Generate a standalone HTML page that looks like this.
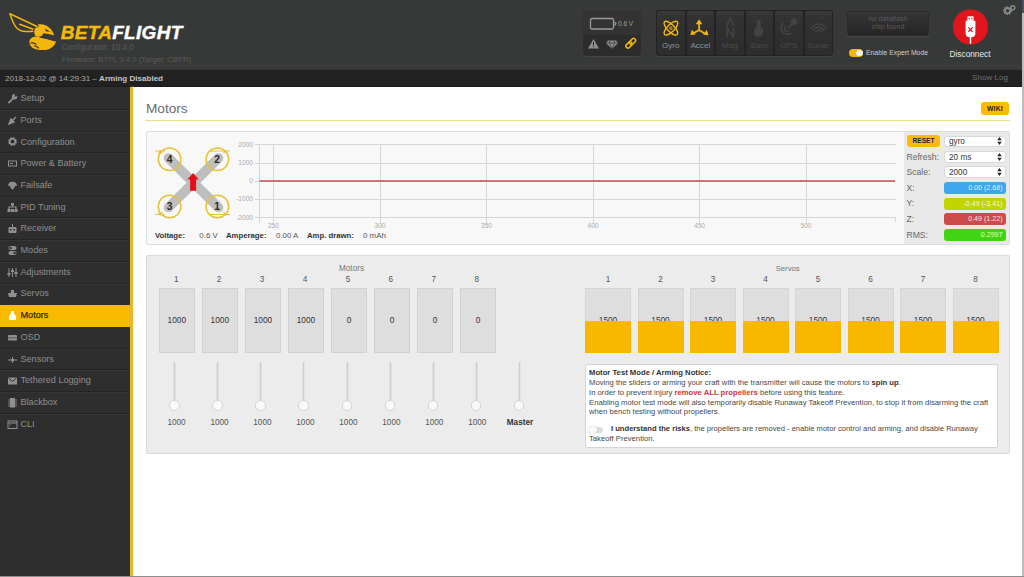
<!DOCTYPE html><html><head><meta charset="utf-8"><style>
*{margin:0;padding:0;box-sizing:border-box}
html,body{width:1024px;height:577px;overflow:hidden}
body{position:relative;background:#fff;font-family:"Liberation Sans",sans-serif;color:#333}
.a{position:absolute}
.t{position:absolute;white-space:nowrap}
#hdr{left:0;top:0;width:1024px;height:70px;background:linear-gradient(#373938 0,#373938 88%,#3b3d3c 95%,#353736 100%)}
#log{left:0;top:70px;width:1024px;height:17px;background:#232222;border-bottom:1.5px solid #1b1b1b}
#side{left:0;top:87px;width:130px;height:490px;background:#2e2e2e}
#strip{left:129.6px;top:87px;width:3.8px;height:490px;background:#e2b832;box-shadow:-0.5px 0 0.5px #1a1a1a,1px 0 1.5px #fff3b8}
#rstrip{left:1022.3px;top:13px;width:1.7px;height:564px;background:#bcbcbc}
.it{position:absolute;left:0;width:130px;color:#8e8e8e;font-size:9.1px;white-space:nowrap}
.it span{position:absolute;left:20.5px}
.it svg{position:absolute;left:6.5px;top:5.3px}
.it:after{content:'';position:absolute;left:0;bottom:-0.5px;width:128px;height:1px;background:#242424;box-shadow:0 1px 0 #353535}
.it.on{background:#f9bb00;color:#3a2b00;-webkit-text-stroke:0.25px #3a2b00}
.it.on:after,.it.nb:after{display:none}
.sel{position:absolute;background:#fff;border:1px solid #d8d8d8;border-radius:3px;font-size:8.2px;color:#333;padding-left:4.5px}
.sel:after{content:"";position:absolute}
.bar{position:absolute;left:943.5px;width:62px;height:12px;border-radius:3px;color:rgba(255,255,255,0.88);font-size:7.1px;text-align:right;padding-right:3px;line-height:12px}
.lbl{position:absolute;left:906.5px;font-size:8.6px;color:#666}
.mb{position:absolute;top:288px;width:36px;height:65px;background:#dedede;border:1px solid #d2d2d2;font-size:8.3px;color:#333;text-align:center;line-height:62px}
.mn{position:absolute;top:275px;width:36px;text-align:center;font-size:8.2px;color:#555}
.trk{position:absolute;top:362px;width:3px;height:44px;background:#cfcfcf;border-left:1px solid #e2e2e2;border-right:1px solid #e2e2e2}
.thb{position:absolute;top:400.3px;width:10.5px;height:10.5px;border-radius:50%;background:#f9f9f9;border:1px solid #d4d4d4}
.mv{position:absolute;top:417.5px;width:40px;text-align:center;font-size:8.2px;color:#555}
.sb{position:absolute;top:288px;width:46px;height:65.3px;background:#dedede;border:1px solid #d4d4d4;font-size:8.3px;color:#333;text-align:center}
.sb i{position:absolute;left:-1px;bottom:-1px;width:calc(100% + 2px);height:32.4px;background:#f8b800}
.sb span{position:absolute;left:0;right:0;top:25.6px;line-height:10px}
.nt{position:absolute;left:589px;font-size:7.7px;color:#474747;white-space:nowrap}
</style></head><body>
<div id="hdr" class="a"></div>
<svg class="a" style="left:0px;top:0px" width="60" height="56" viewBox="0 0 60 56">
<g fill="none" stroke="#f2b60c" stroke-width="1.5" stroke-linejoin="round" stroke-linecap="round">
<path d="M9.9 13.7 L37 26.5 M9.9 13.7 Q11.5 19 14 24 Q17 30 22 31 Q28 32 33 31.3"/>
<path d="M19.7 24.3 L33 29.2"/>
</g>
<path fill="#f2b60c" d="M38 24.3 Q46 23.3 51 29.3 Q53 32 54.2 35.2 Q48 33.8 43 33.3 Q39.5 30.5 38 24.3Z"/>
<path fill="#373938" d="M45.3 28.4 L50.3 31.9 L45.8 31.2Z"/>
<circle cx="38.5" cy="32" r="4.9" fill="#f2b60c"/>
<path fill="none" stroke="#2a2a2a" stroke-width="0.9" d="M34 29 Q33.2 32 34.3 35"/>
<path fill="#f2b60c" d="M29.2 41.5 Q30.5 37 35.5 36.5 Q44 37.8 56.2 41.5 Q53.5 48.5 46 50 Q37 50.6 32 47.5 Q29.4 45 29.2 41.5Z"/>
<path fill="none" stroke="#373938" stroke-width="1.1" d="M39.5 37 Q48 38.3 55.5 41"/>
<path fill="none" stroke="#2e2e2e" stroke-width="1.1" stroke-linecap="round" d="M30.8 43 Q33.5 42.6 36 44.2 M34.4 45.8 Q36.6 46.2 38.4 48"/>
</svg>
<div class="t" style="left:60.8px;top:23.2px;font-size:18.9px;font-weight:bold;font-style:italic;letter-spacing:0.35px;line-height:20px;-webkit-text-stroke:0.45px currentColor"><span style="color:#f5b90a">BETA</span><span style="color:#fff">FLIGHT</span></div>
<div class="t" style="left:61.5px;top:43.2px;font-size:8.2px;color:#585a59;line-height:10px">Configurator: 10.4.0</div>
<div class="t" style="left:61.5px;top:54.6px;font-size:7.8px;color:#585a59;line-height:10px">Firmware: BTFL 3.4.0 (Target: CBFR)</div>
<div class="a" style="left:583px;top:10.5px;width:58px;height:45px;border-radius:3px;background:#2c2c2c;box-shadow:inset 0 1px 0 #262626,0 1px 0 #454545"></div>
<div class="a" style="left:583px;top:10.5px;width:58px;height:24px;border-radius:3px 3px 0 0;background:#333"></div>
<svg class="a" style="left:588px;top:16px" width="50" height="16">
<rect x="2.5" y="2.5" width="23" height="10.5" rx="1.5" fill="none" stroke="#9a9a9a" stroke-width="1.3"/>
<path d="M26.5 6 L28 7.7 L26.5 9.5" fill="none" stroke="#9a9a9a" stroke-width="1.2"/>
</svg>
<div class="t" style="left:618px;top:19.5px;font-size:6.5px;color:#a0a0a0;line-height:8px">0.6 V</div>
<svg class="a" style="left:586px;top:37px" width="54" height="14">
<path d="M7.5 2 L13 11.5 L2 11.5 Z" fill="#8e8e8e"/>
<rect x="7" y="5" width="1" height="3.5" fill="#2c2c2c"/><rect x="7" y="9.3" width="1" height="1" fill="#2c2c2c"/>
<path d="M22 3.5 L30 3.5 L32 6 L26 12 L20 6 Z" fill="#8e8e8e"/>
<path d="M20.5 6 L31.5 6 M24 3.5 L23.5 6 L26 12 L28.5 6 L28 3.5" stroke="#2c2c2c" stroke-width="0.6" fill="none"/>
<g fill="none" stroke="#f0b800" stroke-width="1.5">
<rect x="39.5" y="6" width="7" height="4" rx="2" transform="rotate(-45 43 8)"/>
<rect x="43" y="2.5" width="7" height="4" rx="2" transform="rotate(-45 46.5 4.5)"/>
</g>
</svg>
<div class="a" style="left:656px;top:10.4px;width:177px;height:46px;border-radius:3px;background:#232323;box-shadow:0 1px 0 #424443"></div>
<div class="a" style="left:657.0px;top:11.4px;width:27.6px;height:44px;background:linear-gradient(#3a3a3a,#333 12%,#2f2f2f 50%,#2d2d2d);border-radius:2px"></div>
<div class="a" style="left:686.5px;top:11.4px;width:27.6px;height:44px;background:linear-gradient(#3a3a3a,#333 12%,#2f2f2f 50%,#2d2d2d);border-radius:2px"></div>
<div class="a" style="left:716.0px;top:11.4px;width:27.6px;height:44px;background:linear-gradient(#3a3a3a,#333 12%,#2f2f2f 50%,#2d2d2d);border-radius:2px"></div>
<div class="a" style="left:745.5px;top:11.4px;width:27.6px;height:44px;background:linear-gradient(#3a3a3a,#333 12%,#2f2f2f 50%,#2d2d2d);border-radius:2px"></div>
<div class="a" style="left:775.0px;top:11.4px;width:27.6px;height:44px;background:linear-gradient(#3a3a3a,#333 12%,#2f2f2f 50%,#2d2d2d);border-radius:2px"></div>
<div class="a" style="left:804.5px;top:11.4px;width:27.6px;height:44px;background:linear-gradient(#3a3a3a,#333 12%,#2f2f2f 50%,#2d2d2d);border-radius:2px"></div>
<div class="t" style="left:650.8px;top:41.3px;width:40px;text-align:center;font-size:8.1px;line-height:10px;color:#929292">Gyro</div>
<div class="t" style="left:680.3px;top:41.3px;width:40px;text-align:center;font-size:8.1px;line-height:10px;color:#929292">Accel</div>
<div class="t" style="left:709.8px;top:41.3px;width:40px;text-align:center;font-size:8.1px;line-height:10px;color:#4a4a4a">Mag</div>
<div class="t" style="left:739.3px;top:41.3px;width:40px;text-align:center;font-size:8.1px;line-height:10px;color:#4a4a4a">Baro</div>
<div class="t" style="left:768.8px;top:41.3px;width:40px;text-align:center;font-size:8.1px;line-height:10px;color:#4a4a4a">GPS</div>
<div class="t" style="left:798.3px;top:41.3px;width:40px;text-align:center;font-size:8.1px;line-height:10px;color:#4a4a4a">Sonar</div>
<svg class="a" style="left:0;top:0" width="1024" height="70">
<g fill="none" stroke="#f2b80a" stroke-width="1.4">
<ellipse cx="670.9" cy="28.2" rx="9" ry="3.6" transform="rotate(45 670.9 28.2)"/>
<ellipse cx="670.9" cy="28.2" rx="9" ry="3.6" transform="rotate(-45 670.9 28.2)"/>
<circle cx="670.9" cy="28.2" r="1.2" stroke-width="1"/>
</g>
<g stroke="#f2b80a" stroke-width="1.7" fill="#f2b80a">
<path d="M699.1 30 L699.1 22.5 M699.1 30 L693.5 33.3 M699.1 30 L704.7 33.5" fill="none"/>
<path d="M699.1 19.2 L695.8 24.2 L702.4 24.2Z" stroke="none"/>
<path d="M690.3 35 L692 29.5 L695.5 34.5Z" stroke="none"/>
<path d="M708.5 35.3 L706.8 29.7 L703.2 34.7Z" stroke="none"/>
</g>
<g fill="#434343" stroke="#434343">
<path d="M726.5 26 L730.2 18 L733.9 26" fill="none" stroke-width="1.6"/>
<path d="M727 37 L727 28 L733.4 37 L733.4 28" fill="none" stroke-width="1.6"/>
<rect x="756.6" y="19.5" width="4" height="10" rx="2" stroke="none"/>
<circle cx="758.6" cy="32" r="4.8" stroke="none"/>
<path d="M783.5 23 A5.5 5.5 0 1 0 791 33" fill="none" stroke-width="1.6"/>
<path d="M786 26.5 A2.5 2.5 0 1 0 789 30" fill="none" stroke-width="1.4"/>
<path d="M788 28 L793 23" stroke-width="1.8"/>
<rect x="791" y="18.5" width="6" height="6" transform="rotate(45 794 21.5)" stroke="none"/>
<path d="M810.5 28.5 Q818.5 19.5 826.5 28.5 M812.8 30.3 Q818.5 24 824.2 30.3 M815.2 32 Q818.5 28.5 821.8 32" fill="none" stroke-width="1.7"/>
</g>
</svg>
<div class="a" style="left:847px;top:10.5px;width:82px;height:25.5px;border-radius:3px;background:linear-gradient(#363636,#2c2c2c 60%,#252525);border:1px solid #2a2a2a;box-shadow:0 1px 0 #474747"></div>
<div class="t" style="left:847px;top:15.2px;width:82px;text-align:center;font-size:7.1px;line-height:8px;color:#5a5a5a">no dataflash<br>chip found</div>
<div class="a" style="left:849px;top:49px;width:14px;height:7.5px;border-radius:4px;background:#f0b800"></div>
<div class="a" style="left:856px;top:49.5px;width:6.5px;height:6.5px;border-radius:50%;background:#eee"></div>
<div class="t" style="left:866px;top:48px;font-size:6.85px;line-height:9px;color:#cfcfcf">Enable Expert Mode</div>
<svg class="a" style="left:950px;top:8px" width="42" height="40">
<circle cx="20.5" cy="19" r="17.6" fill="#e2141c"/>
<g fill="#fff">
<rect x="17.4" y="8.3" width="6.2" height="4.6"/>
<path d="M15.6 12.8 L25.4 12.8 L25.4 25.5 Q25.4 28.5 22 29.3 L21.2 29.3 L21.2 35.8 L19.8 35.8 L19.8 29.3 L19 29.3 Q15.6 28.5 15.6 25.5Z"/>
</g>
<rect x="18.6" y="9.8" width="1.2" height="1.5" fill="#e2141c"/><rect x="21.2" y="9.8" width="1.2" height="1.5" fill="#e2141c"/>
<path d="M18.4 19.4 L22.6 23.8 M22.6 19.4 L18.4 23.8" stroke="#e2141c" stroke-width="1.3"/>
</svg>
<div class="t" style="left:949.5px;top:48.5px;font-size:8.3px;line-height:10px;color:#e8e8e8">Disconnect</div>
<svg class="a" style="left:1000px;top:3px" width="20" height="15">
<circle cx="7.5" cy="7.7" r="3.4" fill="none" stroke="#8a8a8a" stroke-width="2" stroke-dasharray="1.4 1.1"/>
<circle cx="7.5" cy="7.7" r="2.6" fill="none" stroke="#8a8a8a" stroke-width="1.6"/>
<circle cx="12.8" cy="4.8" r="2" fill="none" stroke="#8a8a8a" stroke-width="1.4"/>
</svg>
<div class="a" style="left:1021.5px;top:0;width:2.5px;height:13px;background:#4d5260"></div>
<div id="log" class="a"></div>
<div class="t" style="left:5px;top:72.5px;font-size:8.05px;line-height:11px;color:#a9a9a9">2018-12-02 @ 14:29:31 &ndash; <b style="color:#c4c4c4">Arming Disabled</b></div>
<div class="t" style="left:972px;top:72px;font-size:8.1px;line-height:11px;color:#707070">Show Log</div>
<div id="side" class="a"></div>
<div class="it" style="top:87.70px;height:21.71px"><svg width="11" height="11"><path d="M2 9.5 L6.3 5.2" stroke="#909090" stroke-width="1.8" stroke-linecap="round"/><circle cx="7.6" cy="3.7" r="2.7" fill="#909090"/><path d="M8 0.5 L7.6 3.7 L11 3" fill="#2e2e2e"/></svg><span style="top:5.4px;line-height:11px">Setup</span></div>
<div class="it" style="top:109.41px;height:21.71px"><svg width="11" height="11"><path d="M2 9 L4 4 L7 7Z M5 6 L9 2" stroke="#909090" stroke-width="1.4" fill="#909090"/></svg><span style="top:5.4px;line-height:11px">Ports</span></div>
<div class="it" style="top:131.12px;height:21.71px"><svg width="11" height="11"><circle cx="5.5" cy="5.5" r="3.2" fill="none" stroke="#909090" stroke-width="2.4" stroke-dasharray="1.5 1"/><circle cx="5.5" cy="5.5" r="2.8" fill="none" stroke="#909090" stroke-width="1.6"/></svg><span style="top:5.4px;line-height:11px">Configuration</span></div>
<div class="it" style="top:152.83px;height:21.71px"><svg width="11" height="11"><rect x="1.5" y="3" width="8" height="5" fill="none" stroke="#909090" stroke-width="1"/><rect x="3" y="5" width="3" height="1" fill="#909090"/></svg><span style="top:5.4px;line-height:11px">Power &amp; Battery</span></div>
<div class="it" style="top:174.54px;height:21.71px"><svg width="11" height="11"><path d="M1.5 5.5 A4 3.5 0 0 1 9.5 5.5Z M3 6 L5.5 9.5 L8 6" fill="#909090" stroke="#909090" stroke-width="0.8"/></svg><span style="top:5.4px;line-height:11px">Failsafe</span></div>
<div class="it" style="top:196.25px;height:21.71px"><svg width="11" height="11"><path d="M5.5 1.5 V5 M2 8 V5 H9 V8" fill="none" stroke="#909090" stroke-width="1.2"/><rect x="4" y="1" width="3" height="2.5" fill="#909090"/><rect x="0.5" y="7" width="3" height="3" fill="#909090"/><rect x="4" y="7" width="3" height="3" fill="#909090"/><rect x="7.5" y="7" width="3" height="3" fill="#909090"/></svg><span style="top:5.4px;line-height:11px">PID Tuning</span></div>
<div class="it" style="top:217.96px;height:21.71px"><svg width="11" height="11"><rect x="1.5" y="4" width="8" height="6" rx="1" fill="#909090"/><path d="M5.5 4 V1" stroke="#909090"/><rect x="3" y="6" width="1.5" height="1.5" fill="#2e2e2e"/><rect x="6.5" y="6" width="1.5" height="1.5" fill="#2e2e2e"/></svg><span style="top:5.4px;line-height:11px">Receiver</span></div>
<div class="it" style="top:239.67px;height:21.71px"><svg width="11" height="11"><rect x="1.5" y="1" width="8" height="4" rx="2" fill="#909090"/><rect x="1.5" y="6" width="8" height="4" rx="2" fill="#909090"/><circle cx="3.5" cy="3" r="1.2" fill="#2e2e2e"/><circle cx="7.5" cy="8" r="1.2" fill="#2e2e2e"/></svg><span style="top:5.4px;line-height:11px">Modes</span></div>
<div class="it" style="top:261.38px;height:21.71px"><svg width="11" height="11"><path d="M2 1 V10 M5.5 1 V10 M9 1 V10" stroke="#909090" stroke-width="1"/><rect x="0.5" y="6" width="3" height="2" fill="#909090"/><rect x="4" y="3" width="3" height="2" fill="#909090"/><rect x="7.5" y="5" width="3" height="2" fill="#909090"/></svg><span style="top:5.4px;line-height:11px">Adjustments</span></div>
<div class="it nb" style="top:283.09px;height:21.71px"><svg width="11" height="11"><path d="M1 5 H10 L9 9 H2Z" fill="#909090"/><rect x="4" y="2" width="3" height="3" fill="#909090"/></svg><span style="top:5.4px;line-height:11px">Servos</span></div>
<div class="it on" style="top:304.80px;height:21.71px"><svg width="11" height="11"><path d="M4 1 H7 V3.5 Q9 5 9 7 V10 H2 V7 Q2 5 4 3.5Z" fill="#ffffff"/></svg><span style="top:5.4px;line-height:11px">Motors</span></div>
<div class="it" style="top:326.51px;height:21.71px"><svg width="11" height="11"><rect x="1" y="3" width="9" height="5.5" rx="1" fill="#909090"/><path d="M1 5.8 H10" stroke="#2e2e2e" stroke-width="0.6"/></svg><span style="top:5.4px;line-height:11px">OSD</span></div>
<div class="it" style="top:348.22px;height:21.71px"><svg width="11" height="11"><path d="M1 6 H10 M5.5 3 V9" stroke="#909090" stroke-width="1"/><circle cx="5.5" cy="6" r="1.5" fill="#909090"/></svg><span style="top:5.4px;line-height:11px">Sensors</span></div>
<div class="it" style="top:369.93px;height:21.71px"><svg width="11" height="11"><rect x="1" y="2.5" width="9" height="7" fill="#909090"/><path d="M1.5 3 L5.5 6.5 L9.5 3" stroke="#2e2e2e" stroke-width="1" fill="none"/></svg><span style="top:5.4px;line-height:11px">Tethered Logging</span></div>
<div class="it" style="top:391.64px;height:21.71px"><svg width="11" height="11"><rect x="3" y="1" width="5" height="9.5" fill="#909090"/><path d="M1 3 H3 M1 5 H3 M1 7 H3 M1 9 H3 M8 3 H10 M8 5 H10 M8 7 H10 M8 9 H10" stroke="#909090" stroke-width="0.8"/></svg><span style="top:5.4px;line-height:11px">Blackbox</span></div>
<div class="it nb" style="top:413.35px;height:21.71px"><svg width="11" height="11"><rect x="1" y="2" width="9" height="7.5" fill="none" stroke="#909090" stroke-width="1"/><path d="M1 4 H10" stroke="#909090" stroke-width="1"/><path d="M2.5 6 L4 6" stroke="#909090" stroke-width="0.8"/></svg><span style="top:5.4px;line-height:11px">CLI</span></div>
<div id="strip" class="a"></div>
<div id="rstrip" class="a"></div>
<div class="t" style="left:146px;top:100.5px;font-size:13.65px;line-height:16px;color:#6c6c6c">Motors</div>
<div class="a" style="left:145px;top:120px;width:865px;height:1px;background:#e9df86"></div>
<div class="a" style="left:980.6px;top:101.5px;width:28.6px;height:13.5px;background:#ffbb00;border-radius:3px;font-size:6.8px;font-weight:bold;color:#222;text-align:center;line-height:13.5px;letter-spacing:0.2px">WIKI</div>
<div class="a" style="left:146px;top:131px;width:864px;height:113.5px;background:#f8f8f8;border:1px solid #dcdcdc;border-radius:2px"></div>
<svg class="a" style="left:146px;top:140px" width="90" height="85">
<g stroke="#bebebe" stroke-width="9.6" stroke-linecap="round">
<path d="M22.5 18 L72.5 67.5 M72.5 18 L22.5 67.5"/>
</g>
<g fill="none" stroke="#e6c23a" stroke-width="1.5">
<circle cx="23.6" cy="19.3" r="11.3"/><circle cx="71.4" cy="19.3" r="11.3"/>
<circle cx="23.6" cy="66.5" r="11.3"/><circle cx="71.4" cy="66.5" r="11.3"/>
<path d="M9 11 H19 M64 11 H84 M9 74.5 H19 M64 74.5 H84" stroke-width="1.2"/>
<path d="M12.5 13.5 L14.5 10.5 L16.5 13.5 M77.5 13.5 L79.5 10.5 L81.5 13.5 M12.5 72 L14.5 75 L16.5 72 M77.5 72 L79.5 75 L81.5 72" stroke-width="1.2"/>
</g>
<path d="M47.1 33 L52.8 39.5 L50.1 39.5 L50.1 50.8 L44.1 50.8 L44.1 39.5 L41.4 39.5Z" fill="#e3101a"/>
<g font-family="Liberation Sans" font-size="10.3" font-weight="bold" fill="#2a2a2a" text-anchor="middle">
<text x="23.6" y="23">4</text><text x="71.2" y="23">2</text><text x="23.6" y="70.3">3</text><text x="71.2" y="70.3">1</text>
</g>
</svg>
<svg class="a" style="left:230px;top:135px" width="670" height="100"><g stroke="#d6d6d6" stroke-width="1" shape-rendering="crispEdges"><path d="M25 9.9 H665.5"/><path d="M25 28.0 H665.5"/><path d="M25 46.0 H665.5"/><path d="M25 64.1 H665.5"/><path d="M25 82.3 H665.5"/><path d="M43.4 9.900000000000006 V87.5"/><path d="M150.0 9.900000000000006 V87.5"/><path d="M256.5 9.900000000000006 V87.5"/><path d="M363.0 9.900000000000006 V87.5"/><path d="M469.5 9.900000000000006 V87.5"/><path d="M576.0 9.900000000000006 V87.5"/><path d="M29.5 9.900000000000006 V87.5 M665.5 82.30000000000001 V86.5"/></g><path d="M29.5 46 H665" stroke="#c24c55" stroke-width="1.4"/><g font-family="Liberation Sans" font-size="6.6" fill="#aaa" text-anchor="end"><text x="23" y="12.2">2000</text><text x="23" y="30.3">1000</text><text x="23" y="48.3">0</text><text x="23" y="66.4">-1000</text><text x="23" y="84.6">-2000</text></g><g font-family="Liberation Sans" font-size="6.6" fill="#aaa" text-anchor="middle"><text x="43.4" y="92.80000000000001">250</text><text x="150.0" y="92.80000000000001">300</text><text x="256.5" y="92.80000000000001">350</text><text x="363.0" y="92.80000000000001">400</text><text x="469.5" y="92.80000000000001">450</text><text x="576.0" y="92.80000000000001">500</text></g></svg>
<div class="t" style="left:155px;top:231.3px;font-size:7.75px;line-height:10px;color:#333"><b>Voltage:</b></div>
<div class="t" style="left:199.3px;top:231.2px;font-size:7.9px;line-height:10px;color:#555">0.6 V</div>
<div class="t" style="left:226px;top:231.3px;font-size:7.75px;line-height:10px;color:#333"><b>Amperage:</b></div>
<div class="t" style="left:276px;top:231.2px;font-size:7.9px;line-height:10px;color:#555">0.00 A</div>
<div class="t" style="left:307px;top:231.3px;font-size:7.75px;line-height:10px;color:#333"><b>Amp. drawn:</b></div>
<div class="t" style="left:363px;top:231.2px;font-size:7.9px;line-height:10px;color:#555">0 mAh</div>
<div class="a" style="left:904px;top:132px;width:105px;height:112px;background:#e9e9e9"></div>
<div class="a" style="left:907px;top:135px;width:33px;height:12px;background:#ffbb00;border-radius:3px;font-size:6.6px;font-weight:bold;color:#222;text-align:center;line-height:12px">RESET</div>
<div class="sel" style="left:943.5px;top:135.5px;width:62px;height:11.5px;line-height:9.5px;padding-top:0.9px">gyro<svg style="position:absolute;right:3px;top:0.8px" width="5" height="8"><path d="M2.5 0 L4.7 3.3 H0.3Z M2.5 8 L4.7 4.7 H0.3Z" fill="#222"/></svg></div>
<div class="sel" style="left:943.5px;top:151px;width:62px;height:11.5px;line-height:9.5px;padding-top:0.9px">20 ms<svg style="position:absolute;right:3px;top:0.8px" width="5" height="8"><path d="M2.5 0 L4.7 3.3 H0.3Z M2.5 8 L4.7 4.7 H0.3Z" fill="#222"/></svg></div>
<div class="sel" style="left:943.5px;top:166px;width:62px;height:11.5px;line-height:9.5px;padding-top:0.9px">2000<svg style="position:absolute;right:3px;top:0.8px" width="5" height="8"><path d="M2.5 0 L4.7 3.3 H0.3Z M2.5 8 L4.7 4.7 H0.3Z" fill="#222"/></svg></div>
<div class="lbl" style="top:152px;line-height:10px">Refresh:</div>
<div class="lbl" style="top:167px;line-height:10px">Scale:</div>
<div class="lbl" style="top:182.5px;line-height:10px">X:</div>
<div class="lbl" style="top:198px;line-height:10px">Y:</div>
<div class="lbl" style="top:213.5px;line-height:10px">Z:</div>
<div class="lbl" style="top:229.5px;line-height:10px">RMS:</div>
<div class="bar" style="top:181.5px;background:#3ea6ec">0.00 (2.68)</div>
<div class="bar" style="top:197.5px;background:#c2d500">-0.49 (-3.41)</div>
<div class="bar" style="top:213px;background:#cd4b4b">0.49 (1.22)</div>
<div class="bar" style="top:229px;background:#3fd513">0.2997</div>
<div class="a" style="left:146px;top:255px;width:864px;height:199px;background:#ececec;border:1px solid #dadada;border-radius:2px"></div>
<div class="t" style="left:300px;top:263.5px;width:103px;text-align:center;font-size:8.2px;line-height:10px;color:#777">Motors</div>
<div class="mn" style="left:158.2px;line-height:10px">1</div>
<div class="mb" style="left:158.8px">1000</div>
<div class="mn" style="left:201.1px;line-height:10px">2</div>
<div class="mb" style="left:201.8px">1000</div>
<div class="mn" style="left:244.1px;line-height:10px">3</div>
<div class="mb" style="left:244.9px">1000</div>
<div class="mn" style="left:287.1px;line-height:10px">4</div>
<div class="mb" style="left:287.9px">1000</div>
<div class="mn" style="left:330.0px;line-height:10px">5</div>
<div class="mb" style="left:331.0px">0</div>
<div class="mn" style="left:372.9px;line-height:10px">6</div>
<div class="mb" style="left:374.0px">0</div>
<div class="mn" style="left:415.9px;line-height:10px">7</div>
<div class="mb" style="left:417.0px">0</div>
<div class="mn" style="left:458.9px;line-height:10px">8</div>
<div class="mb" style="left:460.1px">0</div>
<div class="trk" style="left:173.3px"></div>
<div class="thb" style="left:169.3px"></div>
<div class="mv" style="left:156.5px;line-height:10px">1000</div>
<div class="trk" style="left:216.4px"></div>
<div class="thb" style="left:212.4px"></div>
<div class="mv" style="left:199.5px;line-height:10px">1000</div>
<div class="trk" style="left:259.4px"></div>
<div class="thb" style="left:255.4px"></div>
<div class="mv" style="left:242.4px;line-height:10px">1000</div>
<div class="trk" style="left:302.4px"></div>
<div class="thb" style="left:298.4px"></div>
<div class="mv" style="left:285.4px;line-height:10px">1000</div>
<div class="trk" style="left:345.5px"></div>
<div class="thb" style="left:341.5px"></div>
<div class="mv" style="left:328.4px;line-height:10px">1000</div>
<div class="trk" style="left:388.6px"></div>
<div class="thb" style="left:384.6px"></div>
<div class="mv" style="left:371.4px;line-height:10px">1000</div>
<div class="trk" style="left:431.6px"></div>
<div class="thb" style="left:427.6px"></div>
<div class="mv" style="left:414.3px;line-height:10px">1000</div>
<div class="trk" style="left:474.6px"></div>
<div class="thb" style="left:470.6px"></div>
<div class="mv" style="left:457.3px;line-height:10px">1000</div>
<div class="trk" style="left:517.7px"></div>
<div class="thb" style="left:513.7px"></div>
<div class="t" style="left:503px;top:417.5px;width:34px;text-align:center;font-size:8.2px;line-height:10px;color:#333;font-weight:bold">Master</div>
<div class="t" style="left:737.7px;top:263.5px;width:100px;text-align:center;font-size:7.7px;line-height:10px;color:#777">Servos</div>
<div class="mn" style="left:585.0px;width:46px;line-height:10px">1</div>
<div class="sb" style="left:585.0px"><span>1500</span><i></i></div>
<div class="mn" style="left:637.5px;width:46px;line-height:10px">2</div>
<div class="sb" style="left:637.5px"><span>1500</span><i></i></div>
<div class="mn" style="left:690.0px;width:46px;line-height:10px">3</div>
<div class="sb" style="left:690.0px"><span>1500</span><i></i></div>
<div class="mn" style="left:742.5px;width:46px;line-height:10px">4</div>
<div class="sb" style="left:742.5px"><span>1500</span><i></i></div>
<div class="mn" style="left:795.0px;width:46px;line-height:10px">5</div>
<div class="sb" style="left:795.0px"><span>1500</span><i></i></div>
<div class="mn" style="left:847.5px;width:46px;line-height:10px">6</div>
<div class="sb" style="left:847.5px"><span>1500</span><i></i></div>
<div class="mn" style="left:900.0px;width:46px;line-height:10px">7</div>
<div class="sb" style="left:900.0px"><span>1500</span><i></i></div>
<div class="mn" style="left:952.5px;width:46px;line-height:10px">8</div>
<div class="sb" style="left:952.5px"><span>1500</span><i></i></div>
<div class="a" style="left:585px;top:363.5px;width:412.5px;height:84px;background:#fff;border:1px solid #d4d4d4;border-radius:2px"></div>
<div class="nt" style="top:367.5px;line-height:10px;color:#333"><b>Motor Test Mode / Arming Notice:</b></div>
<div class="nt" style="top:377.5px;line-height:10px">Moving the sliders or arming your craft with the transmitter will cause the motors to <b style="color:#333">spin up</b>.</div>
<div class="nt" style="top:388.2px;line-height:10px">In order to prevent injury <b style="color:#d8303a">remove ALL propellers</b> before using this feature.</div>
<div class="nt" style="top:398px;line-height:10px">Enabling motor test mode will also temporarily disable Runaway Takeoff Prevention, to stop it from disarming the craft</div>
<div class="nt" style="top:407px;line-height:10px">when bench testing without propellers.</div>
<div class="a" style="left:589.5px;top:426.5px;width:13px;height:6.5px;border-radius:4px;background:#ddd"></div>
<div class="a" style="left:589px;top:426px;width:7.5px;height:7.5px;border-radius:50%;background:#fafafa;box-shadow:0 0 1px #999"></div>
<div class="nt" style="left:611px;top:424px;line-height:10px;font-size:7.6px"><b style="color:#333">I understand the risks</b>, the propellers are removed - enable motor control and arming, and disable Runaway</div>
<div class="nt" style="top:433.5px;line-height:10px">Takeoff Prevention.</div>
<div class="a" style="left:0;top:576px;width:1024px;height:1px;background:#8e8e8e"></div>
</body></html>
